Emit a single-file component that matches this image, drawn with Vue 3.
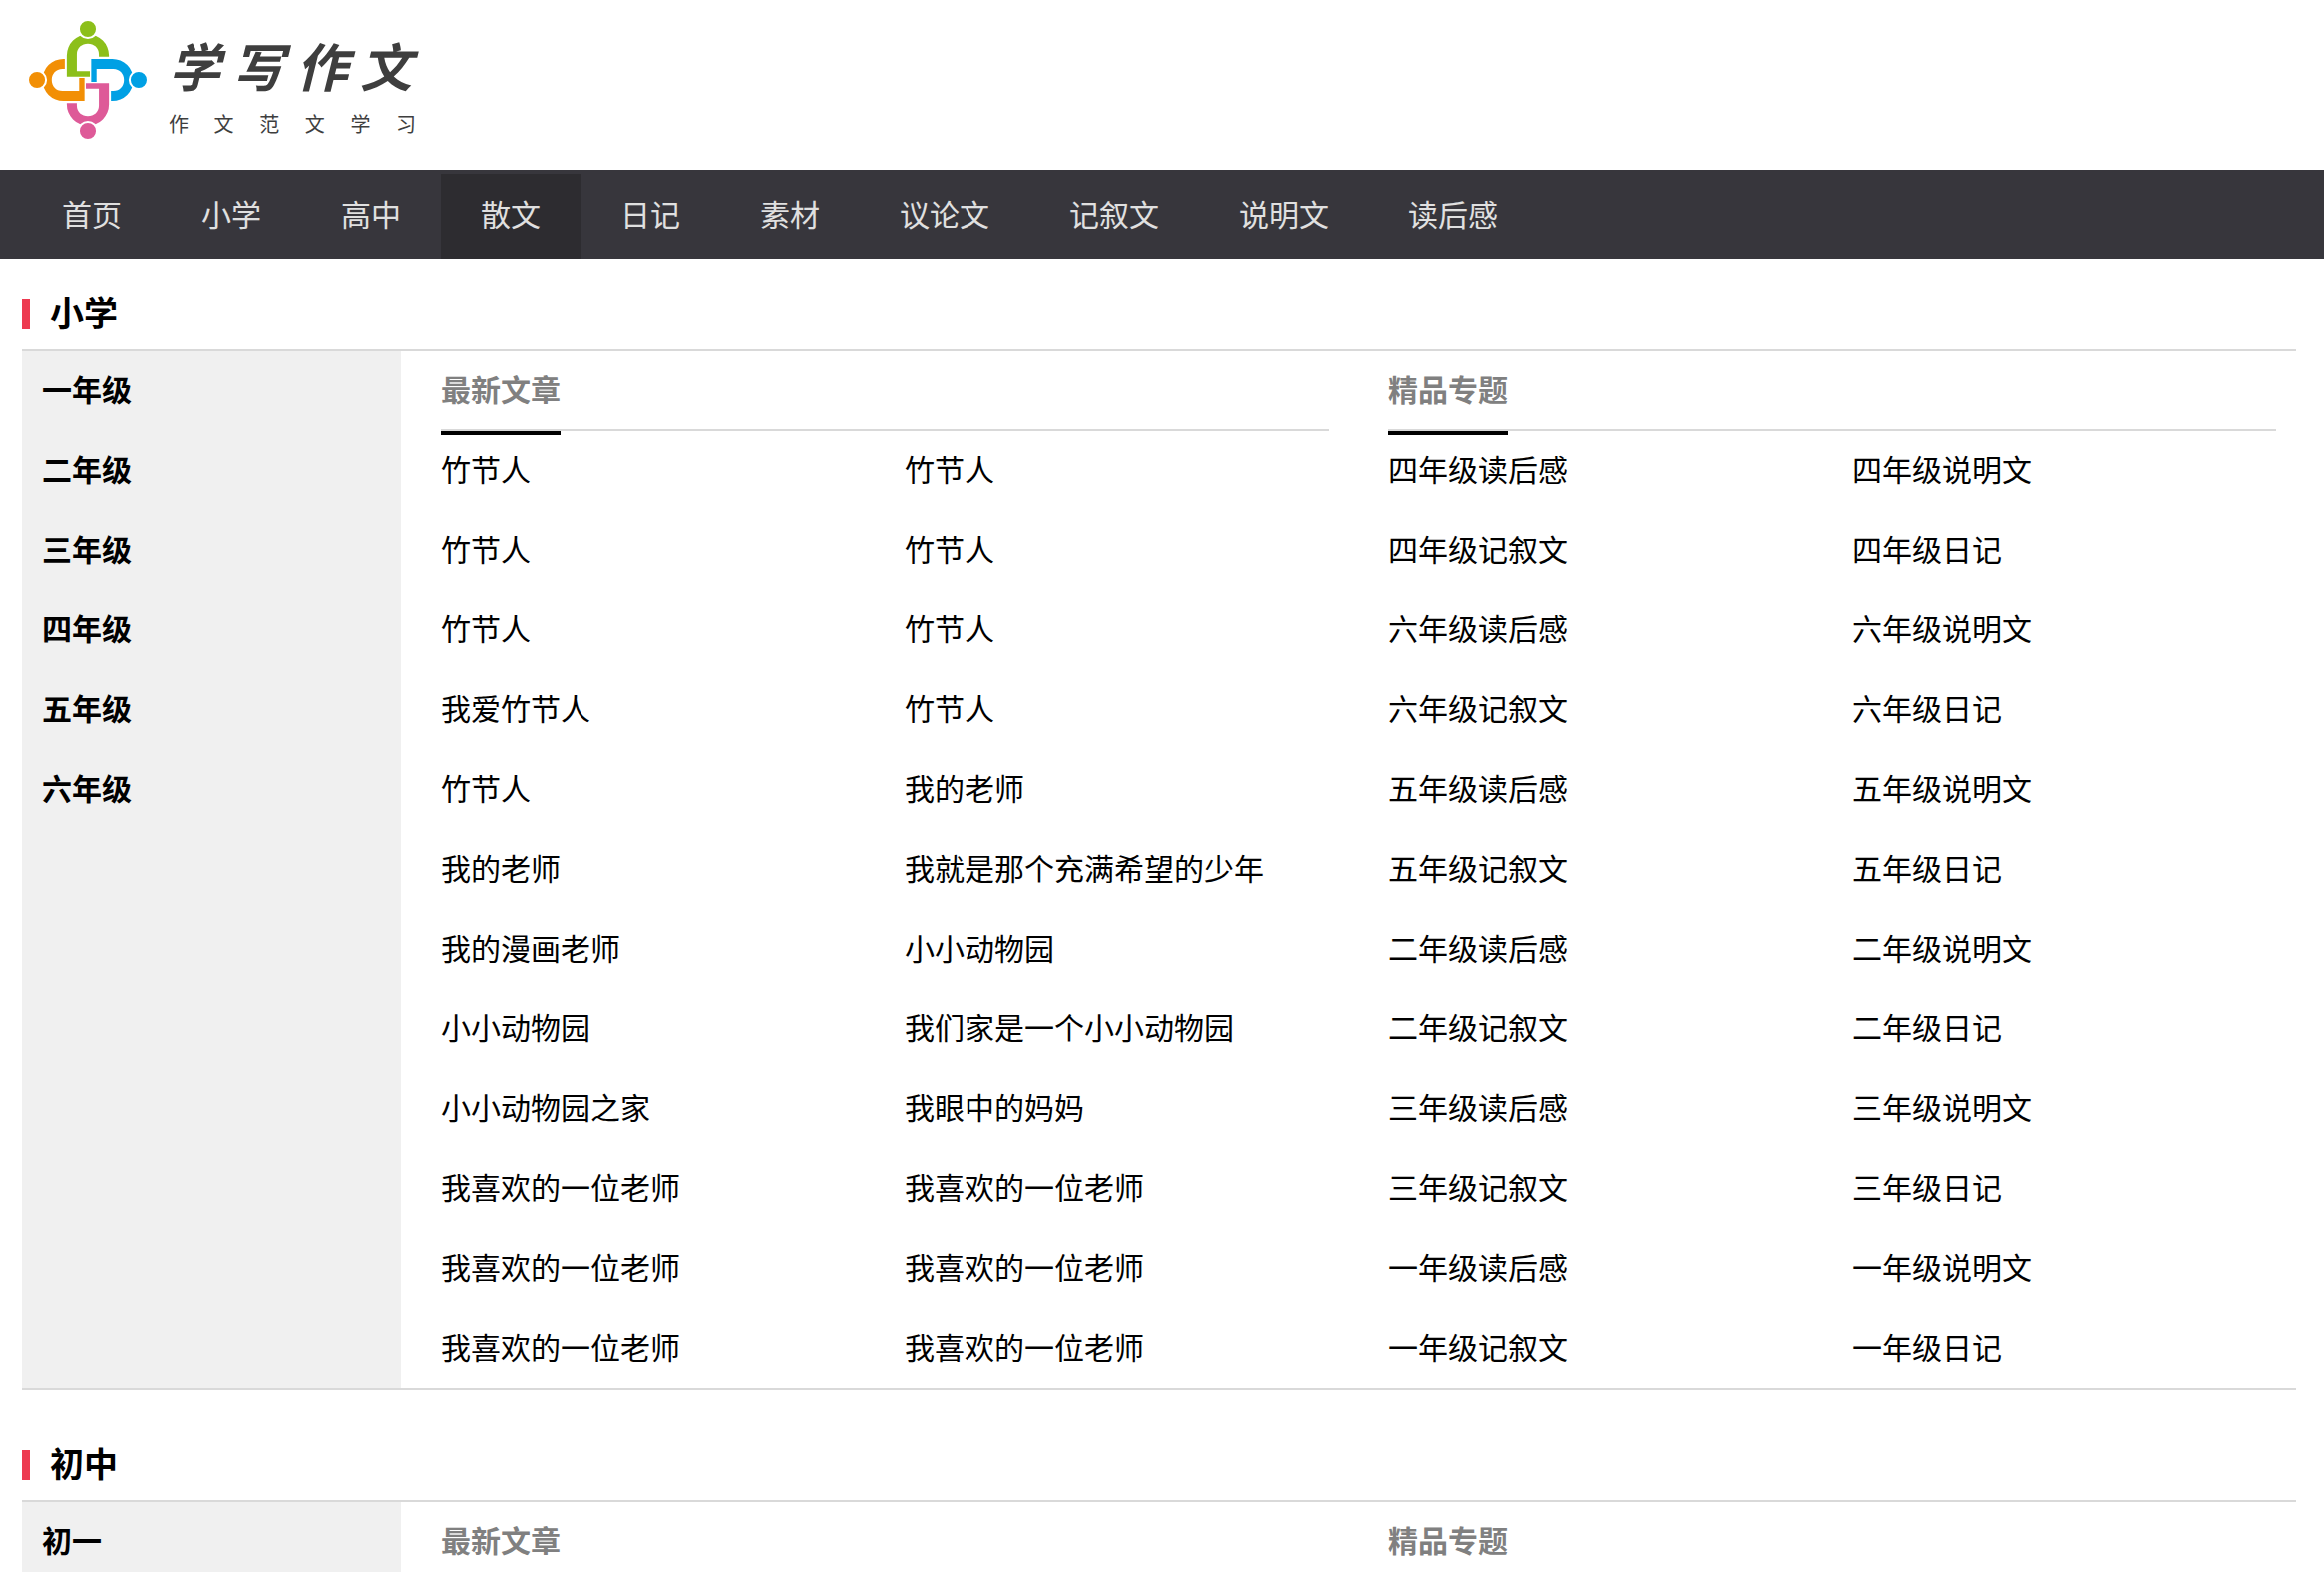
<script setup>
const navItems = ['首页', '小学', '高中', '散文', '日记', '素材', '议论文', '记叙文', '说明文', '读后感']
const activeItem = '散文'

const petals = [
  { color: '#8cbf1a', angle: 0 },
  { color: '#00a0e4', angle: 90 },
  { color: '#de5a98', angle: 180 },
  { color: '#f28f05', angle: 270 },
]

const sections = [
  {
    title: '小学',
    grades: ['一年级', '二年级', '三年级', '四年级', '五年级', '六年级'],
    panels: [
      {
        title: '最新文章',
        links: [
          '竹节人', '竹节人', '竹节人', '竹节人', '竹节人', '竹节人',
          '我爱竹节人', '竹节人', '竹节人', '我的老师',
          '我的老师', '我就是那个充满希望的少年',
          '我的漫画老师', '小小动物园',
          '小小动物园', '我们家是一个小小动物园',
          '小小动物园之家', '我眼中的妈妈',
          '我喜欢的一位老师', '我喜欢的一位老师',
          '我喜欢的一位老师', '我喜欢的一位老师',
          '我喜欢的一位老师', '我喜欢的一位老师',
        ],
      },
      {
        title: '精品专题',
        links: ['四', '六', '五', '二', '三', '一'].flatMap((n) =>
          ['读后感', '说明文', '记叙文', '日记'].map((kind) => `${n}年级${kind}`)
        ),
      },
    ],
  },
  {
    title: '初中',
    grades: ['初一'],
    panels: [
      { title: '最新文章', links: [] },
      { title: '精品专题', links: [] },
    ],
  },
]
</script>

<template>
  <div class="page">
    <header class="site-header">
      <a class="logo" href="#">
        <svg class="logo-mark" viewBox="28 34 352 352" aria-hidden="true">
          <g v-for="p in petals" :key="p.angle" :fill="p.color" :transform="`rotate(${p.angle} 204 210)`">
            <path d="M141 200V137A63 63 0 0 1 267 137V141H237V134C237 114 222 102 204 102C186 102 171 114 171 134V184H210V200Z" />
            <circle cx="204" cy="58" r="27" stroke="#fff" stroke-width="6" />
          </g>
        </svg>
        <span class="logo-text">
          <span class="logo-name">学写作文</span>
          <span class="logo-tagline">作文范文学习</span>
        </span>
      </a>
    </header>

    <nav class="main-nav">
      <a v-for="item in navItems" :key="item" href="#" :class="{ active: item === activeItem }">{{ item }}</a>
    </nav>

    <main>
      <section v-for="section in sections" :key="section.title" class="category">
        <h2>{{ section.title }}</h2>
        <div class="category-body">
          <ul class="grades">
            <li v-for="grade in section.grades" :key="grade"><a href="#">{{ grade }}</a></li>
          </ul>
          <div v-for="panel in section.panels" :key="panel.title" class="panel">
            <div class="panel-head"><h3>{{ panel.title }}</h3></div>
            <ul class="links">
              <li v-for="(link, i) in panel.links" :key="i"><a href="#">{{ link }}</a></li>
            </ul>
          </div>
        </div>
      </section>
    </main>
  </div>
</template>

<style>
body {
  margin: 0;
  background: #fff;
}
</style>

<style scoped>
.page {
  height: 100vh;
  overflow: hidden;
  font-family: "Noto Sans CJK SC", sans-serif;
  font-size: 30px;
  color: #000;
}

a {
  color: inherit;
  text-decoration: none;
}

ul {
  margin: 0;
  padding: 0;
  list-style: none;
}

li {
  padding-bottom: 6px;
  line-height: 74px;
}

.site-header {
  display: flex;
  box-sizing: border-box;
  height: 170px;
  padding: 21px 29px;
}

.logo {
  display: flex;
  gap: 22px;
  color: #3e3e3e;
}

.logo-mark {
  width: 118px;
  height: 118px;
}

.logo-text {
  display: flex;
  flex-direction: column;
  width: 248px;
}

.logo-name,
.logo-tagline {
  text-align: justify;
  text-align-last: justify;
}

.logo-name {
  width: 244px;
  font-size: 52px;
  font-style: italic;
  font-weight: 700;
  line-height: 88px;
}

.logo-tagline {
  font-size: 20px;
  line-height: 30px;
}

.main-nav {
  display: flex;
  padding: 4px 22px 0;
  background: #37363c;
  color: #e0e0e0;
}

.main-nav a {
  padding: 0 40px 6px;
  line-height: 80px;
}

.main-nav .active {
  background: #2d2c30;
}

main {
  padding: 40px 28px 0 22px;
}

.category {
  margin-bottom: 60px;
}

h2 {
  margin: 0 0 20px;
  padding: 0 0 4px 20px;
  border-left: 8px solid #ed3a50;
  font-size: 34px;
  line-height: 26px;
}

.category-body {
  display: grid;
  grid-template-columns: 2fr 5fr 5fr;
  border-top: 2px solid #d9d9d9;
  border-bottom: 2px solid #d9d9d9;
}

.grades {
  padding-left: 20px;
  background: #f0f0f0;
  font-weight: 700;
}

.panel {
  padding: 0 20px 0 40px;
}

.panel-head {
  display: flex;
  box-sizing: border-box;
  height: 80px;
  border-bottom: 2px solid #d9d9d9;
}

h3 {
  margin: 0;
  padding-bottom: 6px;
  height: 74px;
  border-bottom: 4px solid #000;
  color: #808080;
  font-size: 30px;
  line-height: 74px;
}

.links {
  display: grid;
  grid-template-columns: 1fr 1fr;
  column-gap: 40px;
  white-space: nowrap;
}
</style>
